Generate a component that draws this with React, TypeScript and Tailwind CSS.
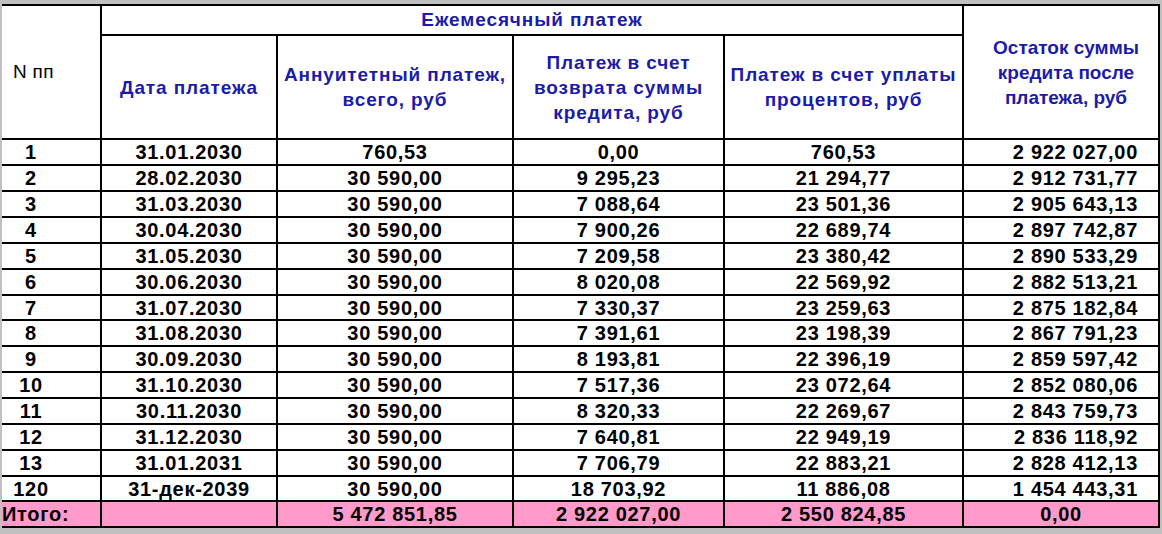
const rows: [string, string, string, string, string, string][] = [
  ['1', '31.01.2030', '760,53', '0,00', '760,53', '2 922 027,00'],
  ['2', '28.02.2030', '30 590,00', '9 295,23', '21 294,77', '2 912 731,77'],
  ['3', '31.03.2030', '30 590,00', '7 088,64', '23 501,36', '2 905 643,13'],
  ['4', '30.04.2030', '30 590,00', '7 900,26', '22 689,74', '2 897 742,87'],
  ['5', '31.05.2030', '30 590,00', '7 209,58', '23 380,42', '2 890 533,29'],
  ['6', '30.06.2030', '30 590,00', '8 020,08', '22 569,92', '2 882 513,21'],
  ['7', '31.07.2030', '30 590,00', '7 330,37', '23 259,63', '2 875 182,84'],
  ['8', '31.08.2030', '30 590,00', '7 391,61', '23 198,39', '2 867 791,23'],
  ['9', '30.09.2030', '30 590,00', '8 193,81', '22 396,19', '2 859 597,42'],
  ['10', '31.10.2030', '30 590,00', '7 517,36', '23 072,64', '2 852 080,06'],
  ['11', '30.11.2030', '30 590,00', '8 320,33', '22 269,67', '2 843 759,73'],
  ['12', '31.12.2030', '30 590,00', '7 640,81', '22 949,19', '2 836 118,92'],
  ['13', '31.01.2031', '30 590,00', '7 706,79', '22 883,21', '2 828 412,13'],
  ['120', '31-дек-2039', '30 590,00', '18 703,92', '11 886,08', '1 454 443,31'],
];

const HeadCell = ({ className, children }: { className: string; children: React.ReactNode }) => (
  <div
    className={`flex items-center justify-center text-center whitespace-nowrap font-bold text-[19px] leading-[25px] tracking-[0.9px] text-[#1b1ba8] border-r-2 border-black ${className}`}
  >
    <div>{children}</div>
  </div>
);

const DataRow = ({ row, short }: { row: string[]; short: boolean }) => (
  <div
    className={`flex shrink-0 ${short ? 'h-[25px]' : 'h-[26px]'} border-b-2 border-black text-[20px] leading-none font-bold tracking-[0.7px] text-black whitespace-nowrap`}
  >
    <div className="w-[100px] border-r-2 border-black flex items-center justify-center pr-[40px]">{row[0]}</div>
    <div className="w-[176px] border-r-2 border-black flex items-center justify-center">{row[1]}</div>
    <div className="w-[236px] border-r-2 border-black flex items-center justify-center">{row[2]}</div>
    <div className="w-[211px] border-r-2 border-black flex items-center justify-center">{row[3]}</div>
    <div className="w-[239px] border-r-2 border-black flex items-center justify-center">{row[4]}</div>
    <div className="w-[194px] flex items-center justify-end pr-[20px]">{row[5]}</div>
  </div>
);

export default function App() {
  return (
    <div className="w-[1162px] h-[534px] bg-[#c0c0c0] pt-[4px] pl-[2px] font-['Liberation_Sans',Arial,sans-serif] overflow-hidden">
      <div className="w-[1158px] bg-white border-t-2 border-r-2 border-black">
        {/* header */}
        <div className="flex h-[134px] border-b-2 border-black">
          <div className="w-[100px] border-r-2 border-black flex items-center pl-[11px] text-[19px] tracking-[0.3px] text-black">
            N пп
          </div>
          <div className="w-[862px] flex flex-col">
            <div className="h-[30px] border-b-2 border-r-2 border-black flex items-center justify-center font-bold text-[19px] tracking-[0.9px] text-[#1b1ba8]">
              Ежемесячный платеж
            </div>
            <div className="flex h-[102px]">
              <HeadCell className="w-[176px]">Дата платежа</HeadCell>
              <HeadCell className="w-[236px]">
                Аннуитетный платеж,
                <br />
                всего, руб
              </HeadCell>
              <HeadCell className="w-[211px]">
                Платеж в счет
                <br />
                возврата суммы
                <br />
                кредита, руб
              </HeadCell>
              <HeadCell className="w-[239px]">
                Платеж в счет уплаты
                <br />
                процентов, руб
              </HeadCell>
            </div>
          </div>
          <div className="w-[194px] flex items-center justify-center pl-[10px] text-center font-bold text-[19px] leading-[25px] tracking-[0px] text-[#1b1ba8] whitespace-nowrap">
            <div>
              Остаток суммы
              <br />
              кредита после
              <br />
              платежа, руб
            </div>
          </div>
        </div>

        {rows.map((r, i) => (
          <DataRow key={r[0]} row={r} short={i === 6 || i === 13} />
        ))}

        {/* totals */}
        <div className="flex h-[26px] border-b-2 border-black bg-[#ff9acb] text-[20px] leading-none font-bold tracking-[0.7px] text-black whitespace-nowrap">
          <div className="w-[100px] border-r-2 border-black flex items-center">Итого:</div>
          <div className="w-[176px] border-r-2 border-black" />
          <div className="w-[236px] border-r-2 border-black flex items-center justify-center">5 472 851,85</div>
          <div className="w-[211px] border-r-2 border-black flex items-center justify-center">2 922 027,00</div>
          <div className="w-[239px] border-r-2 border-black flex items-center justify-center">2 550 824,85</div>
          <div className="w-[194px] flex items-center justify-center">0,00</div>
        </div>
      </div>
    </div>
  );
}
